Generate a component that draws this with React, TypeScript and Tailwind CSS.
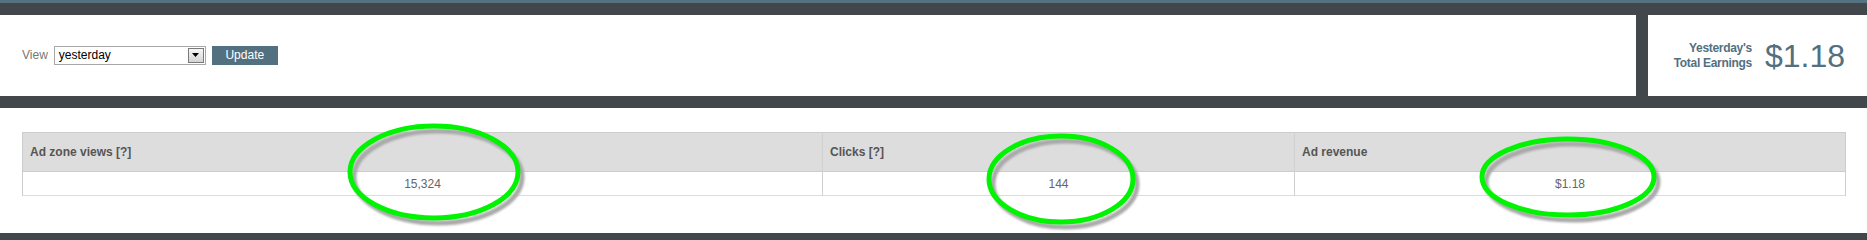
import React from "react";

const stats = [
  { label: "Ad zone views [?]", value: "15,324", width: "w-[799px]" },
  { label: "Clicks [?]", value: "144", width: "w-[472px]" },
  { label: "Ad revenue", value: "$1.18", width: "flex-1" },
];

// green marker rings drawn over the screenshot
const rings = [
  { cx: 434, cy: 172, rx: 84, ry: 46 },
  { cx: 1061, cy: 179, rx: 72, ry: 43 },
  { cx: 1568, cy: 177, rx: 86, ry: 38 },
];

export default function App() {
  return (
    <div
      className="relative w-[1867px] h-[240px] bg-white overflow-hidden"
      style={{ fontFamily: '"Liberation Sans", Arial, sans-serif' }}
    >
      <div className="h-[3px] bg-[#557282]" />
      <div className="bg-[#42474b] pt-[12px] pb-[12px]">
        <div className="flex h-[81px] gap-[12px]">
          {/* Filter form */}
          <div className="flex-1 bg-white flex items-center pl-[22px] pb-[1px]">
            <span className="text-[12px] text-[#777] mr-[6px]">View</span>
            <div className="flex items-center w-[152px] h-[19px] border border-[#a8a8a8] bg-white">
              <span className="flex-1 pl-[4px] text-[12px] text-black leading-none">
                yesterday
              </span>
              <div className="w-[16px] h-[15px] mr-[1px] border border-[#7a7a7a] bg-gradient-to-b from-[#f6f6f6] to-[#d4d4d4] flex items-center justify-center">
                <svg width="7" height="4" viewBox="0 0 7 4">
                  <path d="M0 0h7L3.5 4z" fill="#000" />
                </svg>
              </div>
            </div>
            <button className="ml-[6px] w-[66px] h-[19px] bg-[#527080] text-white text-[12px] leading-none">
              Update
            </button>
          </div>

          {/* Earnings */}
          <div className="w-[219px] bg-white flex items-center justify-end pr-[22px] gap-[13px]">
            <div className="text-right text-[12px] font-bold leading-[15px] text-[#527080] tracking-[-0.3px]">
              <div>Yesterday's</div>
              <div>Total Earnings</div>
            </div>
            <div className="text-[32px] leading-none text-[#527080]">$1.18</div>
          </div>
        </div>
      </div>

      {/* Stats table */}
      <div className="h-[125px] pt-[24px] pl-[22px] pr-[21px]">
        <div className="flex border-t border-x border-[#cccccc]">
          {stats.map((s, i) => (
            <div
              key={s.label}
              className={`${s.width} ${i > 0 ? "border-l border-[#d0d0d0]" : ""}`}
            >
              <div className="h-[39px] bg-[#dddddd] border-b border-[#cccccc] flex items-center pl-[7px] text-[12px] font-bold text-[#555]">
                {s.label}
              </div>
              <div className="h-[24px] bg-white border-b border-[#dddddd] flex items-center justify-center text-[12px] text-[#666]">
                {s.value}
              </div>
            </div>
          ))}
        </div>
      </div>
      <div className="h-[7px] bg-[#42474b]" />

      <svg
        className="absolute inset-0 pointer-events-none"
        width="1867"
        height="240"
      >
        <defs>
          <filter id="soft" x="-10%" y="-10%" width="120%" height="120%">
            <feGaussianBlur stdDeviation="1" />
          </filter>
        </defs>
        {rings.map((r, i) => (
          <g key={i}>
            <ellipse
              cx={r.cx + 4}
              cy={r.cy + 5}
              rx={r.rx}
              ry={r.ry}
              fill="none"
              stroke="#a9a9a9"
              strokeWidth="5"
              filter="url(#soft)"
            />
            <ellipse
              cx={r.cx}
              cy={r.cy}
              rx={r.rx}
              ry={r.ry}
              fill="none"
              stroke="#00f300"
              strokeWidth="5"
            />
          </g>
        ))}
      </svg>
    </div>
  );
}
